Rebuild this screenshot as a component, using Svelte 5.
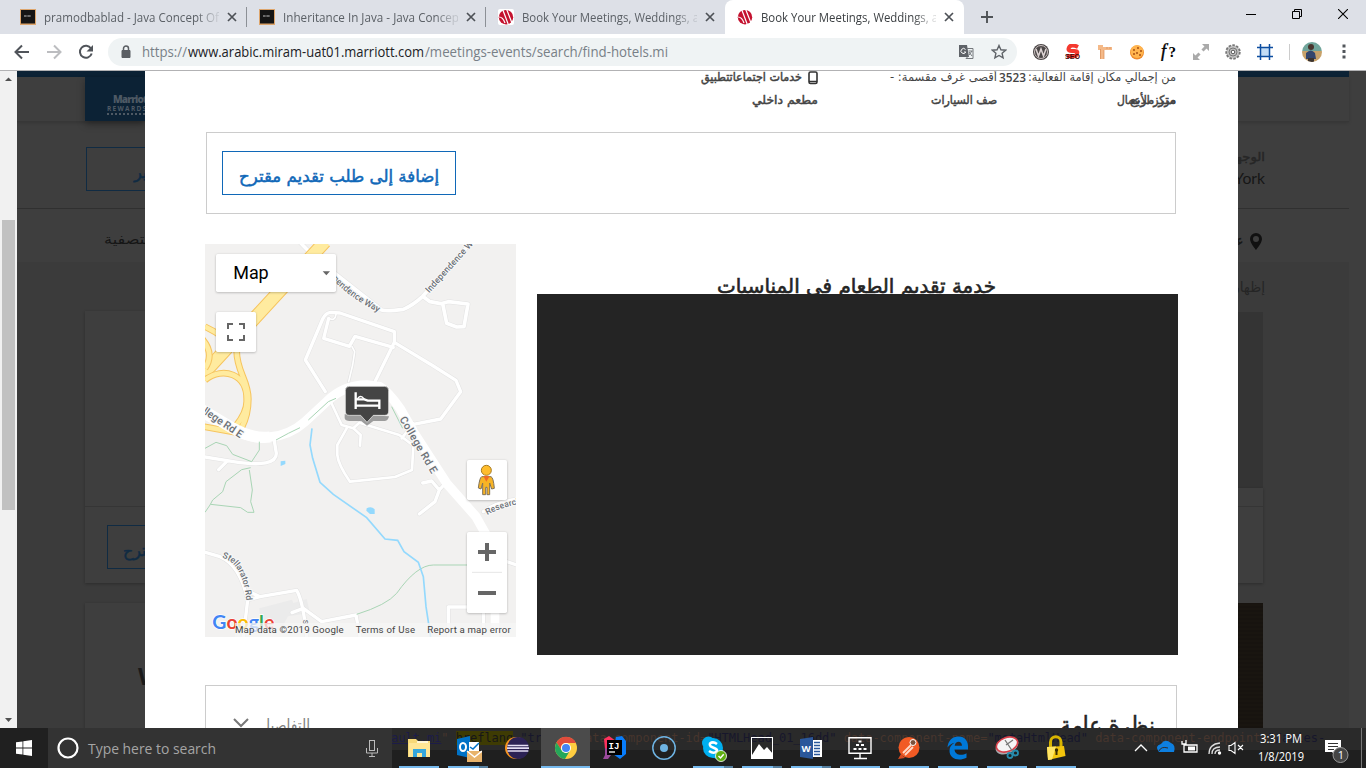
<script>
  const tabs = [
    { title: 'pramodbablad - Java Concept Of', icon: 'java', w: 175 },
    { title: 'Inheritance In Java - Java Concep', icon: 'java', w: 176 },
    { title: 'Book Your Meetings, Weddings, a', icon: 'marriott', w: 177 },
    { title: 'Book Your Meetings, Weddings, a', icon: 'marriott', w: 177, active: true }
  ];
  const apps = [
    { id: 'folder', line: 'full' },
    { id: 'outlook', line: 'multi' },
    { id: 'eclipse', line: '' },
    { id: 'chrome', line: 'wide' },
    { id: 'idea', line: '' },
    { id: 'ring', line: '' },
    { id: 'skype', line: 'multi' },
    { id: 'photos', line: 'multi' },
    { id: 'word', line: 'multi' },
    { id: 'remote', line: 'full' },
    { id: 'postman', line: 'full' },
    { id: 'edge', line: 'full' },
    { id: 'snip', line: 'full' },
    { id: 'lock', line: 'full' }
  ];
</script>

{#snippet fit(t, w, size, h, base, cls)}
  <svg class="fit {cls}" width={w} height={h}>
    <text x={w / 2} y={base} text-anchor="middle" font-size={size} textLength={w} lengthAdjust="spacingAndGlyphs">{t}</text>
  </svg>
{/snippet}

{#snippet favicon(kind)}
  {#if kind === 'java'}
    <svg width="16" height="16" viewBox="0 0 16 16"><rect width="16" height="16" fill="#dda56c" /><rect x="1" y="1" width="14" height="13.5" fill="#151515" /><path d="M4 7h7M5 6v2M9 6v2" stroke="#888" stroke-width="1" /></svg>
  {:else}
    <svg width="16" height="16" viewBox="0 0 16 16"><rect width="16" height="16" rx="2" fill="#fff" /><circle cx="8" cy="8.2" r="7.2" fill="#c4122f" /><path d="M4.500 0l6 16M8.500 0l5.500 14M1 8q4 0 6 6" stroke="#fff" stroke-width="1.200" fill="none" /></svg>
  {/if}
{/snippet}

{#snippet appIcon(id)}
  <svg width="28" height="28" viewBox="0 0 28 28">
    {#if id === 'folder'}
      <path d="M3 5h8l2 2h12v16H3z" fill="#f7d978" /><path d="M4 9h21v14H4z" fill="#ffe695" /><path d="M8 23v-8h13v8h-4v-4h-5v4z" fill="#35a7dc" /><path d="M12 7h11v2H12z" fill="#fff6d8" />
    {:else if id === 'outlook'}
      <path d="M3 5l13-3v22L3 21z" fill="#0072c6" /><path d="M15 8h10v11H15z" fill="#fff" /><path d="M16 13l3 2 6-6" stroke="#0072c6" stroke-width="1.500" fill="none" /><ellipse cx="9" cy="13" rx="3" ry="4" stroke="#fff" stroke-width="2" fill="none" /><path d="M13 17h15v11H13z" fill="#e8b36b" /><path d="M13 17l7.500 6 7.500-6" fill="none" stroke="#fff" stroke-width="1.400" />
    {:else if id === 'eclipse'}
      <circle cx="13" cy="14" r="11" fill="#f7941e" /><circle cx="15" cy="14" r="11" fill="#2c2255" /><path d="M4.500 11.500h20.800M4 14.200h22M4.500 17h20.800" stroke="#e4def4" stroke-width="1.700" />
    {:else if id === 'chrome'}
      <circle cx="14" cy="14" r="11" fill="#ffcd40" /><path d="M4.500 8.500A11 11 0 0 1 24 9H14a5 5 0 0 0-4.500 7.500z" fill="#df4c3c" /><path d="M4.500 8.500A11 11 0 0 0 13 25l5-8.500a5 5 0 0 1-8.600-.5z" fill="#25a75b" /><circle cx="14" cy="14" r="5" fill="#fff" /><circle cx="14" cy="14" r="4" fill="#4285f4" />
    {:else if id === 'idea'}
      <path d="M3 5l5-3 7 5-2 8H4z" fill="#fe315d" /><path d="M15 3l6-1 4 5v13l-6 5-7-5z" fill="#087cfa" /><path d="M4 14l9 3-6 8H2l2-4z" fill="#9b4a9c" /><rect x="6" y="6" width="15" height="15" fill="#000" /><text x="7.500" y="14.500" font-family="Liberation Mono" font-weight="700" font-size="9" fill="#fff">IJ</text><path d="M8 18h6" stroke="#fff" stroke-width="1.300" />
    {:else if id === 'ring'}
      <circle cx="14" cy="14" r="11.200" fill="none" stroke="#6eb3e2" stroke-width="1.500" /><circle cx="14" cy="14" r="4" fill="#6eb3e2" />
    {:else if id === 'skype'}
      <circle cx="9.500" cy="9" r="6.500" fill="#00aff0" /><circle cx="14" cy="14" r="10" fill="#00aff0" /><circle cx="18.500" cy="19" r="6" fill="#00aff0" /><path d="M18 10q-4-3-7-.5c-2 5 8 3.500 7 7.500q-3 3.500-8 0" stroke="#fff" stroke-width="2.600" fill="none" /><circle cx="22" cy="22" r="5.500" fill="#5fae11" stroke="#fff" stroke-width=".8" /><path d="M19.500 22l2 2 3.200-3.700" stroke="#fff" stroke-width="1.500" fill="none" />
    {:else if id === 'photos'}
      <rect x="3.500" y="3.500" width="21" height="21" fill="none" stroke="#fff" /><path d="M4 21l7-11 5 6 3-3 6 7v5H4z" fill="#fff" />
    {:else if id === 'word'}
      <path d="M14 6h11v17H14z" fill="#fff" /><path d="M17 8.500h6M17 11.500h6M17 14.500h6M17 17.500h6M17 20.500h6" stroke="#2b579a" stroke-width="1.300" /><path d="M3 5l13-2v22L3 23z" fill="#2b579a" /><text x="4.500" y="17.500" font-family="Open Sans" font-size="9.500" font-weight="700" fill="#fff">W</text>
    {:else if id === 'remote'}
      <path d="M3 3.700h22v15.600H3zM14 19.500v4.500M8 24.500h13" fill="none" stroke="#fff" stroke-width="1.400" /><path d="M12.500 7.500h3M10 11h3M15 11h3M7.500 15h3M12.500 15h3M17.500 15h3" stroke="#fff" stroke-width="2.200" />
    {:else if id === 'postman'}
      <path d="M3 25l3-5 4 4z" fill="#d94a20" /><circle cx="14" cy="13.500" r="10.500" fill="#f15a24" /><path d="M8 19l8-8M10 21l8-8" stroke="#ffd9c8" stroke-width="1.800" /><circle cx="18" cy="8.500" r="3" fill="#7c523c" stroke="#fff" stroke-width="1" />
    {:else if id === 'edge'}
      <path d="M3.500 13.500C4 7 8 2.500 14.500 2.500c6.500 0 9.500 5 9.500 9.500v3.500H10.500c.5 6 7.500 6.500 12 3.700v4.500c-8 4-17 1-17-7 0-4 2-6 5-8-3.500.8-5.500 2.800-7 4.800zM10.700 11.800H18c0-5.800-7-5.200-7.300 0z" fill="#0078d7" fill-rule="evenodd" />
    {:else if id === 'snip'}
      <ellipse cx="14" cy="12" rx="12" ry="7.500" fill="#a9a9ad" transform="rotate(-25 14 12)" /><ellipse cx="14" cy="10.500" rx="11" ry="7" fill="#f4f4f5" stroke="#d8404a" stroke-width="1.600" transform="rotate(-20 14 10.500)" /><path d="M12 6l8 12M20 6l-7 5" stroke="#777" stroke-width="1.300" /><circle cx="17" cy="21.500" r="2.500" fill="none" stroke="#278cad" stroke-width="1.800" /><circle cx="22.500" cy="19" r="2.500" fill="none" stroke="#278cad" stroke-width="1.800" />
    {:else}
      <path d="M8.500 13V8a5 5 0 0 1 10.500 0v5" fill="none" stroke="#d8b400" stroke-width="3" /><path d="M5 13l17-1 1.500 10L6 26z" fill="#f2c40c" /><path d="M5 13l9-.5-4 13L6 26z" fill="#ffe564" /><path d="M14.500 16v5" stroke="#3a2d00" stroke-width="2" /><circle cx="14.500" cy="16" r="1.700" fill="#3a2d00" />
    {/if}
  </svg>
{/snippet}

<div class="screen">
  <header class="tabstrip">
    {#each tabs as tab, i}
      <div class="tab" class:active={tab.active} class:sep={i < 2}>
        {@render favicon(tab.icon)}
        <span class="tabtitle">{@render fit(tab.title, tab.w, 12.500, 20, 14.500, 'ui')}</span>
        <svg width="10" height="10" viewBox="0 0 10 10"><path d="M1 1l8 8M9 1l-8 8" stroke="#4d5156" stroke-width="1.700" /></svg>
      </div>
    {/each}
    <svg class="plus" width="12" height="12"><path d="M6 0v12M0 6h12" stroke="#4f5357" stroke-width="1.900" /></svg>
    <div class="winbtns">
      <svg width="10" height="10"><path d="M0 5.500h10" stroke="#000" /></svg>
      <svg width="10" height="10"><path d="M2.500 2.500v-2h7v7h-2M.5 2.500h7v7h-7z" fill="none" stroke="#000" /></svg>
      <svg width="10" height="10"><path d="M0 0l10 10M10 0L0 10" stroke="#000" stroke-width="1.100" /></svg>
    </div>
  </header>

  <div class="toolbar">
    <svg width="100" height="36">
      <path d="M29 18H16M22 11.500L15.500 18l6.500 6.500" fill="none" stroke="#50545a" stroke-width="2" />
      <path d="M47 18h13M54 11.500l6.500 6.500-6.500 6.500" fill="none" stroke="#bcbdc0" stroke-width="2" />
      <path d="M91 14.500a6 6 0 1 0 .7 5" fill="none" stroke="#50545a" stroke-width="2" /><path d="M93 11v6.500h-6.500z" fill="#50545a" />
    </svg>
    <div class="omnibox">
      <svg width="10" height="14"><path d="M1 5.500h8v7H1z" fill="#5a5e63" stroke="#5a5e63" /><path d="M2.500 6V3.500a2.500 2.500 0 0 1 5 0V6" fill="none" stroke="#5a5e63" stroke-width="1.500" /></svg>
      <span class="url">{@render fit('https://', 45, 14.500, 22, 16, 'ui dimurl')}{@render fit('www.arabic.miram-uat01.marriott.com', 236, 14.500, 22, 16, 'ui darkurl')}{@render fit('/meetings-events/search/find-hotels.mi', 243, 14.500, 22, 16, 'ui dimurl')}</span>
      <svg width="15" height="15"><path d="M0 0h8l2 12H0z" fill="#5f6368" /><path d="M8 3.500h6v10H7l2-2" fill="none" stroke="#74787c" /><path d="M6.500 4.500a2.500 2.500 0 1 0 .3 2.500H5" fill="none" stroke="#fff" /><path d="M9.500 6h4M10 10l3-4M10 7l3 4" stroke="#74787c" /></svg>
      <svg width="16" height="16" viewBox="0 0 16 16"><path d="M8 1.500l1.900 4.300 4.700.4-3.500 3.100 1 4.600L8 11.500l-4.100 2.400 1-4.600L1.400 6.200l4.700-.4z" fill="none" stroke="#5f6368" stroke-width="1.400" /></svg>
    </div>
    <div class="exts">
      <svg width="16" height="16"><circle cx="8" cy="8" r="8" fill="#4b4747" /><circle cx="8" cy="8" r="6.500" fill="none" stroke="#c8bebe" /><path d="M3 5l2.500 7L8 5l2.500 7L13 5" fill="none" stroke="#ddd4d4" stroke-width="1.500" /></svg>
      <svg width="16" height="16"><path d="M13 3Q6-.5 4 3.500t4.500 3.500 2 5H2" fill="none" stroke="#f5392f" stroke-width="4" /><text x="0" y="15" textLength="15" lengthAdjust="spacingAndGlyphs" font-family="Liberation Sans" font-weight="700" font-size="7.500" fill="#420b09">SEO</text></svg>
      <svg width="16" height="16"><path d="M1 3h14v3H1zM3 6h4v9H3zM1 1h5v3H1z" fill="#f4b988" /><path d="M3.500 5v10M7 6v9M10 3v2M13 3v2" stroke="#d98c56" stroke-width=".7" /></svg>
      <svg width="16" height="16"><circle cx="8" cy="8.500" r="7" fill="#ef8b2c" /><circle cx="8" cy="7.500" r="6.500" fill="#ffb44e" /><path d="M4 6h2M8 4h2M11 7h2M7 9h2M4 10h2M10 11h2" stroke="#a84f12" stroke-width="1.700" /></svg>
      <svg width="18" height="18"><text x="1" y="14" font-family="Liberation Serif" font-size="18" font-style="italic" stroke="#000" stroke-width=".4">f</text><text x="8.500" y="14" font-family="Liberation Serif" font-weight="700" font-size="15">?</text></svg>
      <svg width="16" height="16"><path d="M9 0h7v7zM0 9v7h7z" fill="#aaa" /><path d="M14 2L9.500 6.500M2 14l4.500-4.500" stroke="#aaa" stroke-width="3" /></svg>
      <svg width="16" height="16"><circle cx="8" cy="8" r="6.800" fill="#c2c2c2" stroke="#777" stroke-width="1.800" stroke-dasharray="2.500 1.400" /><circle cx="8" cy="8" r="4" fill="none" stroke="#777" /><circle cx="8" cy="8" r="1.800" fill="#fff" stroke="#555" /></svg>
      <svg width="16" height="16"><rect x="3" y="3" width="10" height="10" fill="#c2dcf5" /><path d="M3.500 0v16M12.500 0v16M0 3.500h16M0 12.500h16" stroke="#0c4da0" stroke-width="1.500" /></svg>
      <i class="bar"></i>
      <svg class="avatar" width="20" height="20"><clipPath id="av"><circle cx="10" cy="10" r="10" /></clipPath><g clip-path="url(#av)"><path d="M0 0h20v9H0z" fill="#70a59b" /><path d="M0 9h20v11H0z" fill="#c8a26a" /><path d="M4 17v-6q5-5 9 0l1 6z" fill="#34466d" /><path d="M6 16h6v4H6z" fill="#3b3430" /><circle cx="9" cy="5" r="3" fill="#49352e" /></g></svg>
      <svg class="dots" width="4" height="16"><path d="M.5 2h3M.5 7.500h3M.5 13h3" stroke="#53575c" stroke-width="3" /></svg>
    </div>
  </div>

  <main class="viewport">
    <div class="scroll">
      <svg width="17" height="17"><path d="M5 10h7L8.500 6.500z" fill="#505050" /></svg>
      <div class="thumb"></div>
      <svg width="17" height="17"><path d="M5 7h7l-3.500 4z" fill="#505050" /></svg>
    </div>

    <aside class="dim left">
      <div class="topbar"></div>
      <div class="mast"><div class="logo"><b>Marriott</b><span>REWARDS</span><i></i></div></div>
      <div class="search"><div class="ghost">{@render fit('تغيير', 31, 16, 30, 24, 'ar bold navy')}</div></div>
      <div class="filter">{@render fit('التصفية', 50, 13.500, 26, 16, 'ar ink')}</div>
      <div class="cards">
        <div class="card one"><div class="ghost">{@render fit('إضافة إلى طلب تقديم مقترح', 190, 16, 30, 24, 'ar bold navy')}</div></div>
        <div class="card two">W</div>
      </div>
    </aside>

    <section class="modal" dir="rtl">
      <div class="facts">
        <div class="c1">{@render fit('من إجمالي مكان إقامة الفعالية:', 148, 12, 22, 13, 'ar fact')}{@render fit('3523', 27, 12.500, 22, 13.500, 'num fact')}</div>
        <div class="c2">{@render fit('أقصى غرف مقسمة: -', 107, 12, 22, 13, 'ar fact')}</div>
        <div class="c3">
          <svg class="phone" width="10" height="14"><rect x="1" y="1" width="8" height="11.500" rx="1.500" fill="none" stroke="#333" stroke-width="1.600" /><path d="M1 10.500h8" stroke="#333" stroke-width="1.500" /></svg>
          {@render fit('خدمات اجتماعاتتطبيق', 101, 12, 22, 13, 'ar bold fact')}
        </div>
      </div>
      <div class="facts second">
        <div class="c1 stack">{@render fit('مركز الأعمال', 59, 12, 22, 13, 'ar bold fact')}{@render fit('متر مربع', 46, 12, 22, 13, 'ar bold fact over')}</div>
        <div class="c2">{@render fit('صف السيارات', 66, 12, 22, 13, 'ar bold fact')}</div>
        <div class="c3">{@render fit('مطعم داخلي', 66, 12, 22, 13, 'ar bold fact')}</div>
      </div>
      <div class="addbox"><div class="addbtn">{@render fit('إضافة إلى طلب تقديم مقترح', 200, 16.500, 30, 24, 'ar bold blue')}</div></div>

      <div class="middle" dir="ltr">
        <svg class="map" width="311" height="393" viewBox="15 27 933 1179">
          <rect x="15" y="27" width="933" height="1179" fill="#f2f1f0" />
          <g fill="#ebebeb"><path d="M178 1120l98-26 4 10 40-12 10 42-66 10-20 36-60 10z" /></g>
          <g fill="none" stroke-linejoin="round" stroke-linecap="round">
            <g class="casing" stroke="#e2e2e2">
              <path stroke-width="14" d="M298 20L345 68L545 225Q560 230 610 223Q640 210 668 184L815 20M668 184L690 200L722 206L745 200L804 207L792 275L770 276L740 265L728 206" />
              <path stroke-width="13" d="M376 470L316 375L368 252Q376 234 392 232L420 234L583 290V322L520 450M386 250L371 310L448 334L465 304L580 337M583 322L700 393L768 436L782 470L722 552L640 568" />
              <path stroke-width="9" d="M386 250Q405 260 408 238M456 335L464 350L458 390L446 440" />
              <path stroke-width="11" d="M390 495L425 570L460 580L478 563L598 600L640 632L636 705L585 726L450 740Q415 690 412 660V630L440 580M460 580L482 600L480 632M605 610L640 565" />
              <path stroke-width="13" d="M10 665L100 680Q230 700 229 655L222 612M80 680L56 704M736 745L718 765L705 800L658 837M718 765L695 738L668 744M850 830Q890 800 950 793M10 950L60 965Q120 990 143 1095L130 1206M143 1095L180 1085L290 1066Q310 1100 320 1206M148 1070L180 1085M310 1120L365 1160L468 1140L480 1206M310 1120L276 1133M745 1206V1116H840M920 980L950 990M850 1110V1180" />
            </g>
            <g stroke="#fff">
              <path stroke-width="11" d="M298 20L345 68L545 225Q560 230 610 223Q640 210 668 184L815 20M668 184L690 200L722 206L745 200L804 207L792 275L770 276L740 265L728 206" />
              <path stroke-width="10" d="M376 470L316 375L368 252Q376 234 392 232L420 234L583 290V322L520 450M386 250L371 310L448 334L465 304L580 337M583 322L700 393L768 436L782 470L722 552L640 568" />
              <path stroke-width="5" d="M386 250Q405 260 408 238M456 335L464 350L458 390L446 440" />
              <path stroke-width="8" d="M390 495L425 570L460 580L478 563L598 600L640 632L636 705L585 726L450 740Q415 690 412 660V630L440 580M460 580L482 600L480 632M605 610L640 565" />
              <path stroke-width="28" d="M-10 525L90 580Q155 618 210 606Q270 600 315 560L380 500Q430 450 500 450L540 455Q565 470 600 520L640 590L740 745L828 845L870 920V980" />
              <path stroke-width="26" d="M885 1110V1206" />
              <path stroke-width="10" d="M10 665L100 680Q230 700 229 655L222 612M80 680L56 704M736 745L718 765L705 800L658 837M718 765L695 738L668 744M850 830Q890 800 950 793M10 950L60 965Q120 990 143 1095L130 1206M143 1095L180 1085L290 1066Q310 1100 320 1206M148 1070L180 1085M310 1120L365 1160L468 1140L480 1206M310 1120L276 1133M745 1206V1116H840M920 980L950 990M850 1110V1180" />
            </g>
          </g>
          <g fill="none" stroke-linejoin="round"><path stroke="#f6c45e" stroke-width="41" d="M375 20L30 395L-10 430" /><path stroke="#ffeb9f" stroke-width="35" d="M375 20L30 395L-10 430" />
            <path stroke="#f6c45e" stroke-width="20" d="M15 275Q70 300 110 348C110 410 145 435 145 492Q145 540 125 578M15 435C70 392 142 418 140 495Q142 530 108 572M5 310Q45 355 15 400M10 575L150 600" /><path stroke="#ffeb9f" stroke-width="14" d="M15 275Q70 300 110 348C110 410 145 435 145 492Q145 540 125 578M15 435C70 392 142 418 140 495Q142 530 108 572M5 310Q45 355 15 400M10 575L150 600" /></g>
          <path d="M-10 515L90 575Q155 613 210 606" fill="none" stroke="#fff" stroke-width="34" />
          <g fill="none" stroke="#a9d5b5" stroke-width="3"><path d="M228 615L265 595L300 578M325 555L385 500L408 490M575 515L608 580M15 640L48 622L80 632L98 658L155 680L178 645V620M152 698L125 704L78 740L68 770L38 795L30 810L15 832M148 705L157 765L152 800L162 832H143L122 818L32 808M470 1138Q560 1110 590 1075Q650 990 700 990H805" /></g>
          <g fill="none" stroke="#94d9fd" stroke-width="5"><path d="M336 580L330 630L338 670L360 742L400 778L500 848L555 912L593 916L612 950L655 982L670 1025L678 1115L692 1206" /></g>
          <path d="M242 679l14-2v10l-14 6zM500 820q14-8 24 3v14h-14l-11-10z" fill="#94d9fd" />
          <g class="road" fill="#6b7076" stroke="#f8f8f8" stroke-width="6" paint-order="stroke" font-size="27">
            <path id="iw" d="M396 132Q455 195 545 236" fill="none" stroke="none" /><text textLength="172"><textPath href="#iw">pendence Way</textPath></text>
            <path id="in" d="M688 175L850 -5" fill="none" stroke="none" /><text textLength="225"><textPath href="#in">Independence Way</textPath></text>
            <path id="cr" d="M-8 524L150 630" fill="none" stroke="none" /><text font-size="32" textLength="154"><textPath href="#cr">ollege Rd E</textPath></text>
            <path id="ce" d="M598 552L712 748" fill="none" stroke="none" /><text font-size="32" textLength="192"><textPath href="#ce">College Rd E</textPath></text>
            <path id="rs" d="M862 840Q910 812 1000 800" fill="none" stroke="none" /><text font-size="26"><textPath href="#rs">Research</textPath></text>
            <path id="st" d="M66 968Q132 985 140 1110" fill="none" stroke="none" /><text font-size="26" textLength="158"><textPath href="#st">Stellarator Rd</textPath></text>
            <text transform="translate(310 1154) rotate(90)" font-size="23">S</text>
          </g>
          <path d="M434 538v12q2 8 15 8h35l17 14 19-14h35q10-2 12-14z" fill="#777" opacity=".7" />
          <path d="M448 454h106q12 0 12 12v62q0 13-12 13h-34l-19 21-19-21h-34q-12 0-12-13v-62q0-12 12-12z" fill="#444" stroke="#f2f1f0" stroke-width="2" />
          <path d="M467 472v50M467 512h74M538 522v-25h-35l-10-4h-26" fill="none" stroke="#fff" stroke-width="7" /><path d="M472 494q4-13 15-8l7 8" fill="none" stroke="#fff" stroke-width="4" />
          <g style="filter: drop-shadow(0 2px 3px #0004)"><rect x="48" y="57" width="360" height="114" rx="5" fill="#fff" /><rect x="48" y="231" width="120" height="120" rx="5" fill="#fff" /><rect x="801" y="675" width="120" height="120" rx="5" fill="#fff" /><rect x="801" y="891" width="120" height="243" rx="5" fill="#fff" /></g>
          <text x="100" y="132" font-family="Roboto" font-size="54" textLength="106">Map</text><path d="M368 109h22l-11 12z" fill="#666" />
          <path d="M84 282v-15h15M117 267h15v15M132 300v15h-15M99 315H84v-15" fill="none" stroke="#666" stroke-width="6" />
          <path d="M861 924v54M834 951h54M834 1074h54" stroke="#666" stroke-width="12" /><path d="M816 1012h90" stroke="#e6e6e6" stroke-width="3" />
          <path d="M845 725h28q7 2 10 35l-8 2-6-18v35h-8v-22h-4v22h-9v-35l-5 18-8-3q4-32 10-34z" fill="#f8b425" stroke="#80735b" stroke-width="3" /><circle cx="859" cy="706" r="15" fill="#ffbd2c" stroke="#a67b24" stroke-width="3" /><path d="M850 723l9 17 10-17z" fill="#ef6a26" />
          <text x="37" y="1181" font-family="Lato" font-weight="700" font-size="57" textLength="186" lengthAdjust="spacingAndGlyphs" stroke="#fff" stroke-width="4" paint-order="stroke"><tspan fill="#4285f4">G</tspan><tspan fill="#ea4335">o</tspan><tspan fill="#fbbc05">o</tspan><tspan fill="#4285f4">g</tspan><tspan fill="#34a853">l</tspan><tspan fill="#ea4335">e</tspan></text>
          <rect x="105" y="1164" width="843" height="42" fill="#f5f5f5" opacity=".75" />
          <g font-family="Roboto" font-size="29" fill="#444"><text x="105" y="1194" textLength="326">Map data ©2019 Google</text><text x="467" y="1194" textLength="178">Terms of Use</text><text x="682" y="1194" textLength="250">Report a map error</text></g>
        </svg>
        <div class="cater">
          <div class="catertitle">{@render fit('خدمة تقديم الطعام في المناسبات', 279, 20, 36, 21, 'ar bold head')}</div>
          <div class="black"></div>
        </div>
      </div>

      <div class="overview">
        {@render fit('نظرة عامة', 95, 25, 50, 30, 'ar bold head')}
        <div class="details">{@render fit('التفاصيل', 50, 17, 50, 27, 'ar grey')}<svg width="16" height="10"><path d="M1 1l7 7 7-7" fill="none" stroke="#777" stroke-width="2" /></svg></div>
      </div>
    </section>

    <aside class="dim right" dir="rtl">
      <div class="inner">
        <div class="topbar"></div>
        <div class="mast"></div>
        <div class="search">
          {@render fit('الوجهة', 36, 12, 22, 13, 'ar bold ink2')}
          {@render fit('New York', 66, 16, 22, 14, 'lato ink')}
        </div>
        <div class="filter"><svg width="12" height="18"><path d="M6 0a6 6 0 0 1 6 6c0 4-6 11-6 11S0 10 0 6a6 6 0 0 1 6-6zm0 3a3 3 0 1 0 0 6 3 3 0 0 0 0-6z" fill="#111" /></svg>{@render fit('عرض', 25, 14, 24, 15, 'ar bold ink')}</div>
        <div class="cards">
          <div class="show">{@render fit('إظهار', 32, 15, 30, 18, 'ar ink3')}</div>
          <div class="pic"></div>
          <div class="rcard"></div>
          <div class="brown"></div>
        </div>
      </div>
    </aside>
  </main>

  <footer class="taskbar">
    <div class="code"><div><u>ault.mi</u>" <mark>hreflang</mark>=<b>"tr-TR"</b> data-component-id=<b>"HTMLHead_01_16dd"</b> data-component-name=<b>"metaHtmlHead"</b> data-component-endpoint=<b>"/aries-</b></div></div>
    <div class="start"><svg width="16" height="16"><path d="M0 2.300L6.500 1.400V7.600H0zM7.300 1.300L16 0v7.600H7.300zM0 8.400h6.500v6.200L0 13.700zM7.300 8.400H16V16l-8.700-1.300z" fill="#fff" /></svg></div>
    <div class="find">
      <svg width="22" height="22"><circle cx="11" cy="11" r="9.500" fill="none" stroke="#fff" stroke-width="2.200" /></svg>
      {@render fit('Type here to search', 128, 14.500, 24, 18, 'ui hint')}
      <svg width="12" height="17"><rect x="3.500" y=".5" width="5" height="10" fill="none" stroke="#bbb" /><path d="M.5 8v5h11V8M6 13v3.500M3 16.500h6" fill="none" stroke="#bbb" /></svg>
    </div>
    <div class="apps">
      {#each apps as app}
        <div class="app {app.id}">{@render appIcon(app.id)}<i class={app.line}></i></div>
      {/each}
    </div>
    <div class="tray">
      <svg width="120" height="40">
        <path d="M5 23l6-6 6 6" fill="none" stroke="#fff" stroke-width="1.300" />
        <path d="M29 24q-5-6 2-8 4-6 10-1 5 2 3 9z" fill="#0d7fe0" /><path d="M29 23q2-5 9-3" stroke="#2d2d2d" fill="none" />
        <path d="M54 17h13v7H54zM67 19v3M52 13v3h4v-4M54 16v3" fill="none" stroke="#fff" stroke-width="1.300" /><path d="M58 18.500h7v4h-7z" fill="#fff" />
        <path d="M79 26Q79 16 90 15M82 26Q82 19 90 19M85 26Q85 22 90 22" fill="none" stroke="#ddd" stroke-width="1.300" /><circle cx="89.500" cy="25" r="1.700" fill="#fff" />
        <path d="M99 17.500h2l4-3v11l-4-3h-2zM108 17l5 5M113 17l-5 5" fill="none" stroke="#fff" stroke-width="1.100" />
      </svg>
      <div class="clock">{@render fit('3:31 PM', 42, 12, 18, 14, 'ui white')}{@render fit('1/8/2019', 46, 12, 18, 14, 'ui white')}</div>
      <svg class="note" width="32" height="40"><path d="M6 12h16v12h-5v4l-4-4H6z" fill="#fff" /><path d="M9 15.500h10M9 18.500h10M9 21.500h6" stroke="#333" /><circle cx="21.500" cy="27" r="7.500" fill="#454545" stroke="#999" /><text x="18.700" y="31" font-family="Open Sans" font-size="11" fill="#fff">1</text></svg>
      <i class="peek"></i>
    </div>
  </footer>
</div>

<style>
  :global(body) { margin: 0; }
  .screen { width: 1366px; height: 768px; overflow: hidden; display: flex; flex-direction: column; background: #fff; }
  svg { display: block; flex: none; }
  .fit { overflow: visible; fill: currentColor; }
  .ui { font-family: 'Open Sans', sans-serif; }
  .ar { font-family: 'DejaVu Sans', sans-serif; direction: rtl; }
  .num { font-family: 'Open Sans', sans-serif; font-weight: 600; }
  .lato { font-family: Lato, sans-serif; direction: ltr; }
  .bold { stroke: currentColor; stroke-width: .5px; }
  .navy { color: #102b43; } .ink { color: #161616; } .ink2 { color: #262626; } .ink3 { color: #252525; }
  .fact { color: #444; } .blue { color: #1068b8; } .head { color: #242424; stroke-width: .6px; } .grey { color: #808080; }
  .dimurl { color: #788087; } .darkurl { color: #202124; } .hint { color: #a5a5a5; } .white { color: #fff; }

  .tabstrip { height: 34px; background: #dde0e7; display: flex; align-items: center; padding-left: 8px; box-sizing: border-box; }
  .tab { width: 239px; height: 34px; box-sizing: border-box; padding: 0 10px 0 12px; display: flex; align-items: center; gap: 8px; position: relative; color: #5b6066; }
  .tab.sep::after { content: ''; position: absolute; right: 0; top: 7px; height: 20px; width: 1px; background: #8c9096; }
  .tab.active { background: #fff; border-radius: 8px 8px 0 0; color: #3c4043; }
  .tabtitle { flex: 1; min-width: 0; mask-image: linear-gradient(90deg, #000 87%, #0003 98%); }
  .plus { margin-left: 17px; }
  .winbtns { margin-left: auto; display: flex; gap: 36px; padding-right: 18px; margin-top: -6px; }
  .toolbar { height: 36px; display: flex; align-items: center; border-bottom: 1px solid #b2b2b4; background: #fff; }
  .omnibox { width: 909px; height: 28px; margin-left: 8px; border-radius: 14px; background: #eff3f4; display: flex; align-items: center; padding: 0 10px 0 13px; box-sizing: border-box; gap: 17px; }
  .url { display: flex; flex: 1; margin-left: -6px; gap: 1px; }
  .exts { display: flex; align-items: center; gap: 16px; margin-left: 16px; }
  .exts > svg:nth-child(5) { margin-right: -1px; margin-left: -1px; }
  .exts .bar { width: 1px; height: 16px; background: #ccc; }
  .avatar { margin-left: -4px; } .dots { margin-left: 4px; }

  .viewport { height: 657px; display: flex; }
  .scroll { width: 17px; background: #f1f1f1; display: flex; flex-direction: column; align-items: center; }
  .thumb { width: 13px; height: 290px; background: #c1c1c1; margin: 132px 0 auto; }
  .dim { width: 128px; overflow: hidden; background: #3e3e3e; }
  .topbar { height: 6px; background: #0c2235; }
  .mast { height: 45px; box-sizing: border-box; border-bottom: 1px solid #373737; display: flex; justify-content: flex-end; box-shadow: 0 1px 3px #0002; }
  .logo { width: 60px; height: 44px; background: #0c2235; color: #4e5964; font: 700 9px/10px 'Open Sans', sans-serif; padding: 17px 0 0 22px; box-sizing: border-box; overflow: hidden; box-shadow: 0 3px 8px #0005; }
  .logo b { display: block; font-size: 10px; padding-left: 6px; letter-spacing: -.8px; font-weight: 800; }
  .logo span { display: block; font-size: 6.500px; letter-spacing: 1.300px; }
  .logo i { display: block; width: 50px; border-top: 2px dotted #4e5964; margin-top: -1px; }
  .search { border-bottom: 1px solid #303030; box-sizing: content-box; }
  .ghost { width: 250px; height: 42px; border: 1px solid #102b43; display: flex; align-items: center; box-sizing: content-box; }
  .left .search { padding: 25px 0 0 69px; height: 61px; }
  .left .search .ghost { padding-left: 47px; }
  .filter { height: 53px; box-sizing: border-box; }
  .left .filter { padding: 19px 0 0 87px; }
  .left .cards, .right .cards { background: #3b3b3b; height: 466px; }
  .left .cards { padding: 49px 0 0 68px; box-sizing: border-box; display: flex; flex-direction: column; gap: 20px; }
  .card { background: #3e3e3e; box-shadow: 0 1px 3px #0004; box-sizing: border-box; flex: none; }
  .one { height: 272px; padding: 214px 0 0 22px; background-image: linear-gradient(#353535, #353535); background-size: 100% 1px; background-repeat: no-repeat; background-position: 0 195px; }
  .one .ghost { padding-left: 15px; }
  .two { height: 130px; padding: 59px 0 0 53px; font: 700 24px/28px 'Open Sans', sans-serif; color: #1a1a1a; }

  .modal { width: 1093px; height: 657px; overflow: hidden; background: #fff; box-sizing: border-box; padding: 0 61px 0 60px; }
  .facts { display: flex; height: 23px; padding-right: 1px; margin-top: -3px; }
  .facts.second { margin-top: 0; }
  .c1, .c2, .c3 { display: flex; width: 179px; }
  .c1 { gap: 2px; }
  .c3 { gap: 6px; }
  .phone { margin-top: 3px; }
  .stack { display: grid; }
  .stack > :global(svg) { grid-area: 1 / 1; }
  .addbox { height: 62px; width: 953px; border: 1px solid #ccc; margin: 18px 1px 0 0; padding: 18px 0 0 15px; box-sizing: content-box; display: flex; justify-content: flex-end; }
  .addbtn { width: 232px; height: 42px; border: 1px solid #1068b8; display: flex; align-items: center; justify-content: center; }
  .middle { display: flex; gap: 21px; margin-top: 30px; margin-right: -1px; height: 411px; width: 973px; }
  .map { display: block; }
  .road { font-family: Roboto, sans-serif; font-weight: 500; }
  .cater { width: 641px; flex: none; }
  .catertitle { height: 22px; padding: 28px 0 0 180px; overflow: hidden; }
  .black { height: 361px; background: #242424; }
  .overview { margin-top: 30px; border: 1px solid #ccc; height: 80px; padding: 18px 21px 0 27px; display: flex; justify-content: space-between; }
  .details { display: flex; gap: 11px; } .details > svg:last-child { margin-top: 14px; }

  .right .inner { width: 111px; margin-right: 17px; }
  .right .search { padding: 26px 84px 0 0; height: 60px; }
  .right .filter { display: flex; gap: 7px; padding: 24px 87px 0 0; }
  .right .filter :global(svg.fit) { margin-top: -3px; }
  .show { height: 50px; padding: 12px 84px 0 0; box-sizing: border-box; }
  .pic, .rcard, .brown { width: 25px; margin-right: 86px; }
  .pic { height: 176px; background: #343434; }
  .rcard { height: 95px; background: linear-gradient(#353535, #353535) 0 18px / 100% 1px no-repeat #3e3e3e; box-shadow: 0 1px 3px #0004; }
  .brown { height: 125px; margin-top: 20px; background: repeating-linear-gradient(0deg, #17130f 0 2px, #191510 2px 4px); }

  .taskbar { height: 40px; position: relative; background: linear-gradient(#2a2a2a 0 22px, #1f1f1f 22px); display: flex; }
  .code { position: absolute; inset: 0 0 0 391px; overflow: hidden; font: 12px/20px 'DejaVu Sans Mono', monospace; letter-spacing: -.04px; white-space: pre; color: #46352d; }
  .code b { font-weight: 400; color: #17172c; }
  .code u { color: #1c1c48; }
  .code mark { background: #3e3b03; color: #171717; }
  .start { width: 48px; display: flex; align-items: center; justify-content: center; background: #202020; position: relative; }
  .find { width: 344px; box-sizing: border-box; background: #333; display: flex; align-items: center; padding: 0 14px 0 9px; gap: 9px; position: relative; }
  .find > svg:last-child { margin-left: auto; }
  .apps { display: flex; padding-left: 2px; position: relative; }
  .app { width: 49px; height: 40px; display: flex; flex-direction: column; align-items: center; justify-content: space-between; padding-top: 6px; box-sizing: border-box; }
  .app i { width: 40px; height: 2px; }
  .app i.full, .app i.wide { background: #76b9ed; }
  .app i.multi { background: linear-gradient(90deg, #76b9ed 0 31px, #557f9f 31px); }
  .app.chrome { background: #4b4b4b; } .app i.wide { width: 49px; }
  .tray { margin-left: auto; display: flex; position: relative; width: 236px; }
  .clock { width: 61px; padding-top: 1px; display: flex; flex-direction: column; align-items: center; margin-left: 0; }
  .note { margin-left: 8px; }
  .peek { width: 1px; background: #777; margin-left: 10px; }
</style>
